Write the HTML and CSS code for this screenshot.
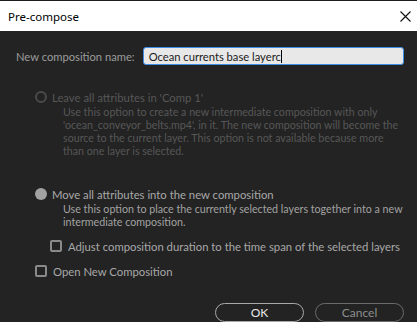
FILE: index.html
```html
<!DOCTYPE html>
<html lang="en">
<head>
    <meta charset="UTF-8">
    <title>Pre-compose</title>
    <link rel="stylesheet" href="styles.css">
</head>
<body>
    <div class="titlebar">
        <span class="title">Pre-compose</span>
        <svg class="close" width="11" height="11" viewBox="0 0 11 11">
            <path d="M0.5 0.5 L10.5 10.5 M10.5 0.5 L0.5 10.5" stroke="#111" stroke-width="1.1" fill="none"/>
        </svg>
    </div>
    <main class="dialog">
        <div class="name-row">
            <label for="comp-name">New composition name:</label>
            <div class="name-input"><span id="comp-name">Ocean currents base layerc</span><span class="caret"></span></div>
        </div>

        <div class="option disabled">
            <div class="option-head">
                <span class="radio"></span>
                <span>Leave all attributes in 'Comp 1'</span>
            </div>
            <p class="desc">Use this option to create a new intermediate composition with only<br>'ocean_conveyor_belts.mp4', in it. The new composition will become the<br>source to the current layer. This option is not available because more<br>than one layer is selected.</p>
        </div>

        <div class="option">
            <div class="option-head">
                <span class="radio checked"></span>
                <span>Move all attributes into the new composition</span>
            </div>
            <p class="desc">Use this option to place the currently selected layers together into a new<br>intermediate composition.</p>
            <div class="check sub">
                <span class="box"></span>
                <span>Adjust composition duration to the time span of the selected layers</span>
            </div>
        </div>

        <div class="check">
            <span class="box"></span>
            <span>Open New Composition</span>
        </div>

        <div class="buttons">
            <button class="btn primary">OK</button>
            <button class="btn">Cancel</button>
        </div>
    </main>
</body>
</html>
```

FILE: styles.css
```css
body {
    margin: 0;
    background: #232323;
    font-family: "Open Sans", "Noto Sans", sans-serif;
    overflow: hidden;
}
.titlebar {
    height: 30px;
    border-top: 1px solid #1c1c1c;
    background: #fff;
    display: flex;
    align-items: center;
    justify-content: space-between;
    padding: 0 6px 0 8px;
}
.title {
    font-family: "Noto Sans", sans-serif;
    font-size: 11.5px;
    color: #000;
}
.dialog {
    padding: 16px 13px 0 16px;
    font-family: "Lato", sans-serif;
}
.name-row {
    display: flex;
    align-items: center;
    gap: 8px;
}
.name-row label {
    font-size: 11.2px;
    color: #9c9c9c;
}
.name-input {
    flex: 1;
    height: 16px;
    border: 1px solid #3a8ee6;
    border-radius: 3px;
    background: #e8e8e8;
    display: flex;
    align-items: center;
    padding: 0 5px;
    font-size: 11.2px;
    color: #1a1a1a;
}
.caret {
    width: 1px;
    height: 13px;
    background: #000;
}
.option {
    margin-left: 19px;
    margin-top: 24px;
}
.option + .option {
    margin-top: 29px;
}
.option-head {
    display: flex;
    align-items: center;
    gap: 5px;
    font-size: 11.3px;
    color: #a8a8a8;
    height: 16px;
    white-space: nowrap;
}
.radio {
    width: 12px;
    height: 12px;
    box-sizing: border-box;
    border-radius: 50%;
    border: 2px solid #4a4a4a;
}
.radio.checked {
    border: none;
    background: #a2a2a2;
}
.desc {
    margin: 0 0 0 28px;
    font-size: 10.7px;
    line-height: 13px;
    color: #a2a2a2;
    white-space: nowrap;
}
.disabled .option-head,
.disabled .desc {
    color: #575757;
}
.check {
    display: flex;
    align-items: center;
    gap: 6px;
    font-size: 11.3px;
    color: #a8a8a8;
    height: 16px;
    margin: 9px 0 0 19px;
    white-space: nowrap;
}
.check.sub {
    margin: 10px 0 0 15px;
}
.box {
    width: 12px;
    height: 12px;
    box-sizing: border-box;
    border: 2px solid #8a8a8a;
    border-radius: 2px;
}
.buttons {
    display: flex;
    justify-content: flex-end;
    gap: 11px;
    margin-top: 24px;
}
.btn {
    width: 89px;
    height: 19px;
    border-radius: 10px;
    border: 1.5px solid #6a6a6a;
    background: transparent;
    font-family: "Lato", sans-serif;
    font-size: 12px;
    color: #8e8e8e;
    padding: 0;
}
.btn.primary {
    border-color: #a8a8a8;
    color: #e8e8e8;
}
```
